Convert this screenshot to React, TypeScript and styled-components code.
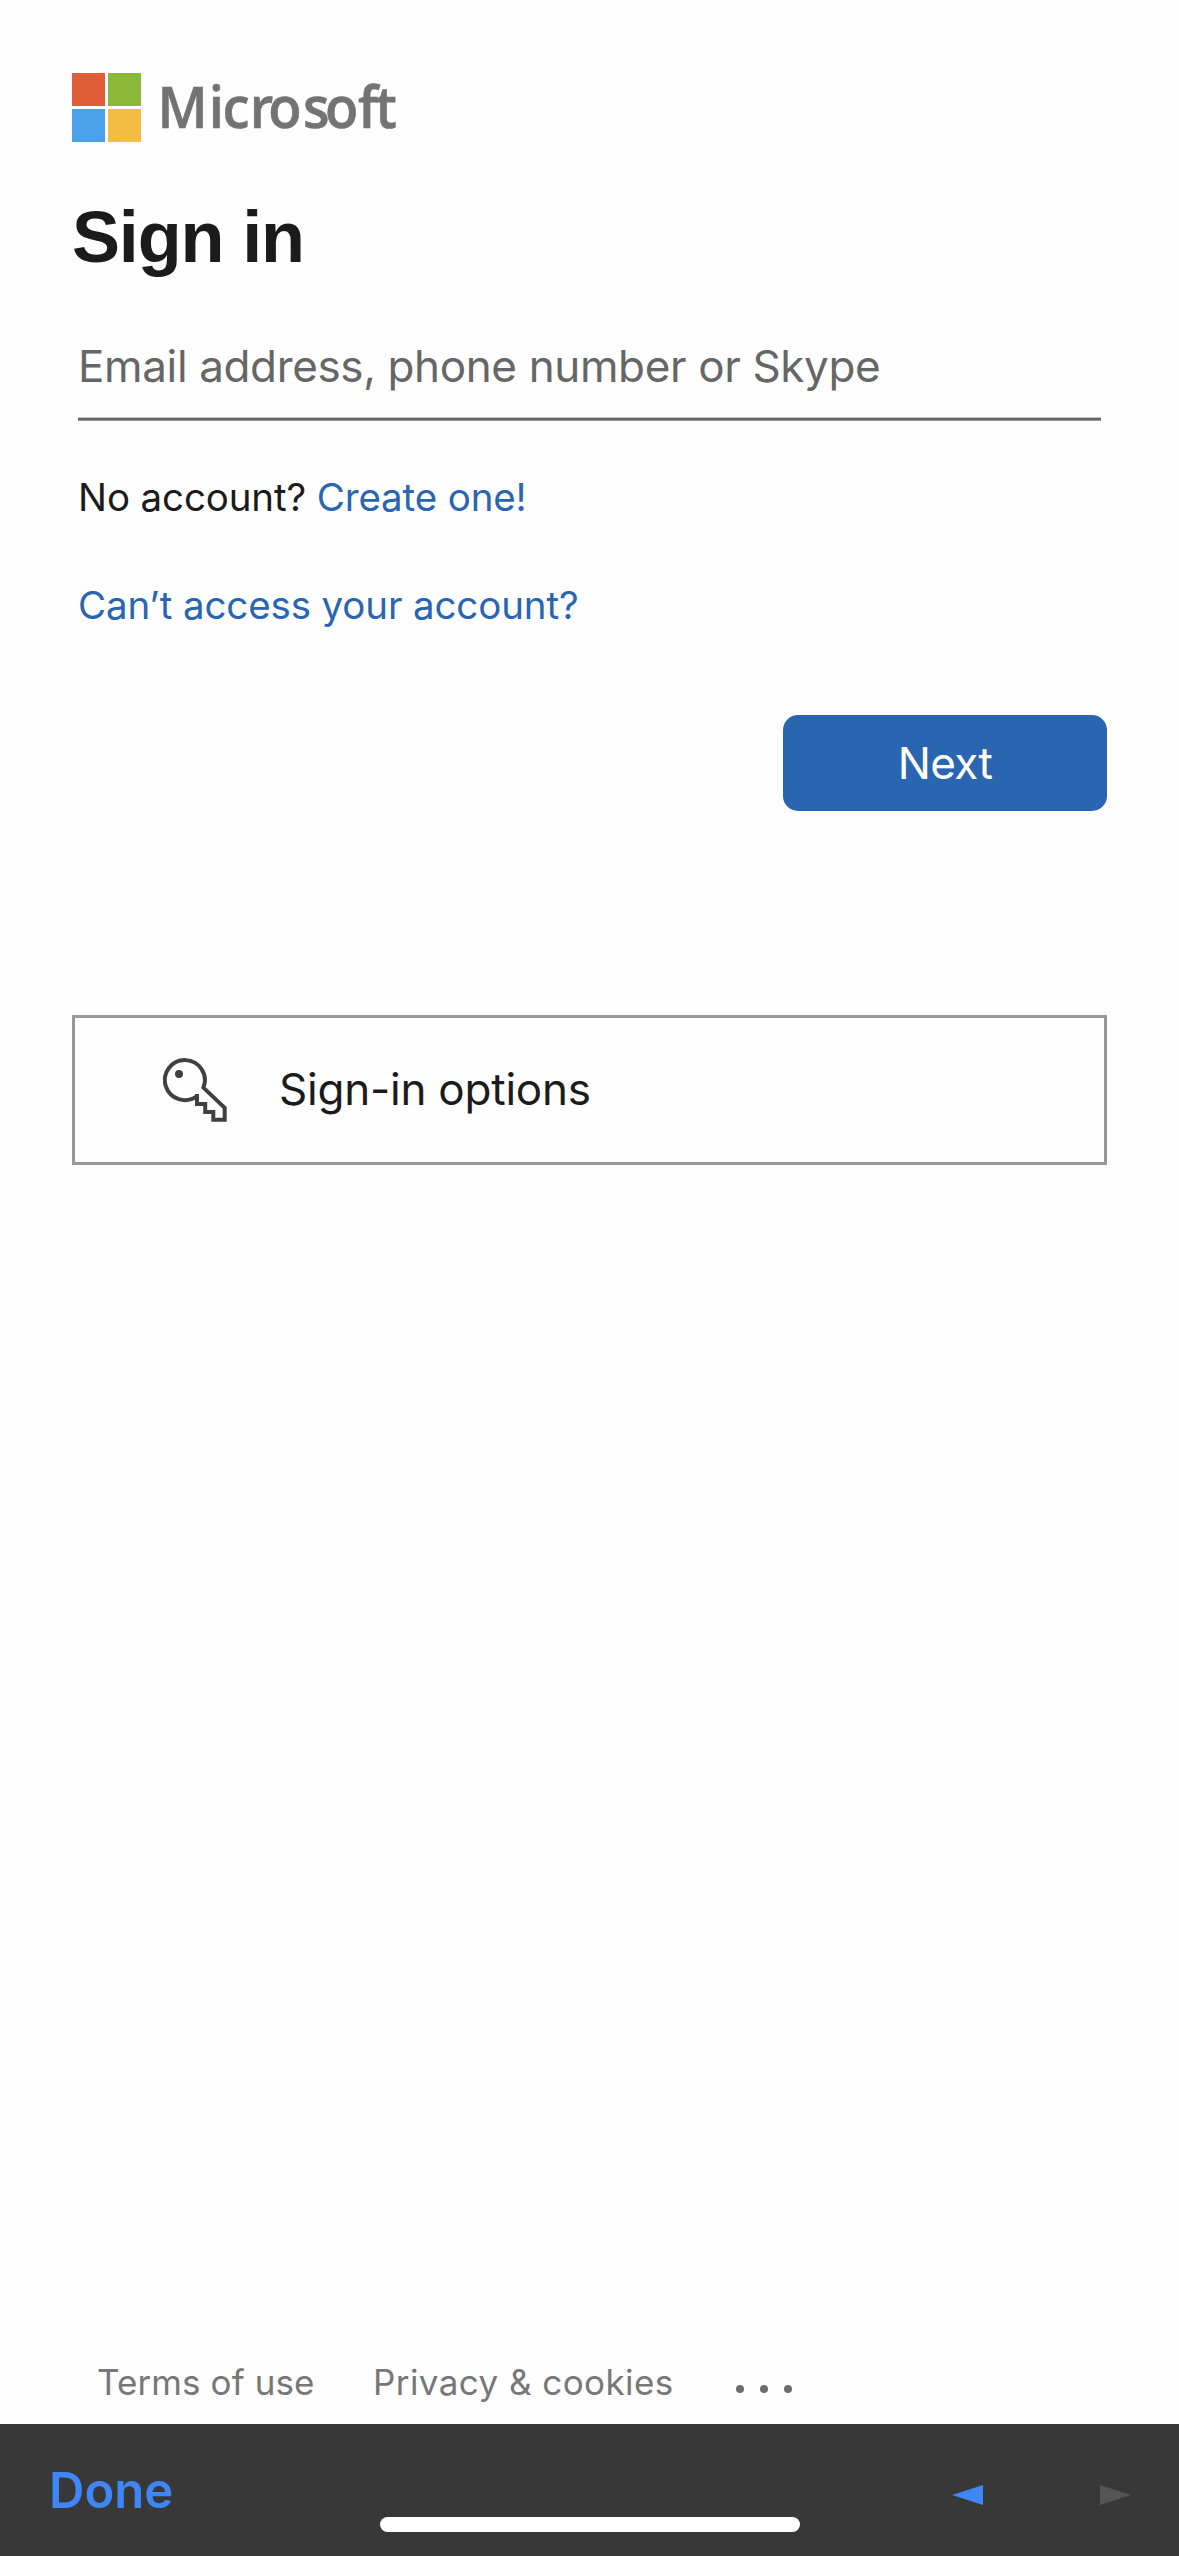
import React from "react";
import styled, { createGlobalStyle } from "styled-components";

const GlobalStyle = createGlobalStyle`
  * { box-sizing: border-box; }
  body { margin: 0; background: #fff; }
  h1, p { margin: 0; }
  a { text-decoration: none; }
`;

const Screen = styled.div`
  position: relative;
  display: flex;
  flex-direction: column;
  width: 1179px;
  height: 2556px;
  background: #fefefe;
  color: #1b1b1b;
  font-family: Inter, "Liberation Sans", sans-serif;
  overflow: hidden;
`;

const Content = styled.main`
  flex: 1;
  display: flex;
  flex-direction: column;
  padding: 73px 72px 0;
`;

const Brand = styled.svg`
  display: block;
  flex: none;
  overflow: visible;
`;

const Wordmark = styled.text`
  font: 600 57.5px "Open Sans", "Noto Sans", sans-serif;
  fill: #737373;
  stroke: #737373;
  stroke-width: 0.6px;
`;

const Title = styled.h1`
  margin-top: 53px;
  font: 700 72px/84px "Liberation Sans", Arial, sans-serif;
  letter-spacing: -1.17px;
`;

const Field = styled.div`
  margin: 57px 6px 0;
`;

const FieldLabel = styled.label`
  display: block;
  height: 81px;
  font-size: 44px;
  line-height: 60px;
  letter-spacing: -0.365px;
  color: #666;
`;

const FieldRule = styled.div`
  height: 4px;
  background: #666;
  border-top: 1px solid #c4c4c4;
  border-bottom: 1px solid #999;
`;

const Line = styled.p<{ $gap: number }>`
  margin: ${(p) => p.$gap}px 6px 0;
  font-size: 38.5px;
  line-height: 56px;
  letter-spacing: -0.13px;
`;

const Link = styled.a`
  color: #2a65b1;
`;

const NextButton = styled.button`
  align-self: flex-end;
  width: 324px;
  height: 96px;
  margin-top: 82px;
  padding: 0;
  border: 0;
  border-radius: 15px;
  background: #2a65b1;
  color: #fff;
  font: 400 44px/60px Inter, sans-serif;
  letter-spacing: -0.6px;
`;

const OptionsButton = styled.button`
  display: flex;
  align-items: center;
  gap: 52px;
  height: 150px;
  margin-top: 204px;
  padding: 0 0 0 88px;
  border: 3px solid #999;
  background: #fefefe;
  color: #1b1b1b;
  font: 400 44px/58px Inter, sans-serif;
  letter-spacing: -0.22px;
`;

const OptionsLabel = styled.span`
  padding-bottom: 2px;
`;

const Footer = styled.footer`
  display: flex;
  align-items: center;
  padding: 0 97px 18px;
  font-size: 35px;
  line-height: 48px;
  color: #777;
`;

const FooterLink = styled.a<{ $width: number; $tracking: number }>`
  width: ${(p) => p.$width}px;
  letter-spacing: ${(p) => p.$tracking}px;
  white-space: nowrap;
`;

const Dots = styled.svg`
  display: block;
  margin-top: 13px;
`;

const Toolbar = styled.nav`
  display: flex;
  align-items: center;
  height: 132px;
  padding: 0 48px 0 49px;
  background: #383838;
`;

const Done = styled.span`
  padding-top: 2px;
  font-size: 49px;
  line-height: 60px;
  font-weight: 600;
  color: #3f86f8;
`;

const Arrows = styled.div`
  display: flex;
  gap: 117px;
  margin: 9px 0 0 auto;
`;

const HomeIndicator = styled.div`
  position: absolute;
  left: 380px;
  bottom: 24px;
  width: 420px;
  height: 15px;
  border-radius: 8px;
  background: #fff;
`;

function MicrosoftLogo() {
  return (
    <Brand width="330" height="69" viewBox="0 0 330 69">
      <rect width="33" height="33" fill="#e05d37" />
      <rect x="36" width="33" height="33" fill="#8bb838" />
      <rect y="36" width="33" height="33" fill="#4aa0e9" />
      <rect x="36" y="36" width="33" height="33" fill="#f4bc42" />
      <Wordmark
        transform="scale(0.95 1)"
        x="90 143.9 158.3 187.2 206.7 243.3 266.4 301.1 319.2"
        y="55.4"
      >
        Microsoft
      </Wordmark>
    </Brand>
  );
}

function KeyIcon() {
  return (
    <svg width="64" height="64" viewBox="0 0 64 64" fill="none" stroke="#404040" strokeWidth="4">
      <path d="M34 38A20 20 0 1 1 40.4 29.6L61.7 49.8V61.8H50.3V54H42.2V46H34V36" />
      <circle cx="16" cy="16" r="4" fill="#404040" stroke="none" />
    </svg>
  );
}

export default function App() {
  return (
    <Screen>
      <GlobalStyle />
      <Content>
        <MicrosoftLogo />
        <Title>Sign in</Title>
        <Field>
          <FieldLabel>Email address, phone number or Skype</FieldLabel>
          <FieldRule />
        </Field>
        <Line $gap={48}>
          No account? <Link>Create one!</Link>
        </Line>
        <Line $gap={52}>
          <Link>Can’t access your account?</Link>
        </Line>
        <NextButton>Next</NextButton>
        <OptionsButton>
          <KeyIcon />
          <OptionsLabel>Sign-in options</OptionsLabel>
        </OptionsButton>
      </Content>
      <Footer>
        <FooterLink $width={276} $tracking={0.1}>Terms of use</FooterLink>
        <FooterLink $width={363} $tracking={0.43}>Privacy &amp; cookies</FooterLink>
        <Dots width="56" height="8" viewBox="0 0 56 8" fill="#6e6e6e">
          <circle cx="4" cy="4" r="4" />
          <circle cx="28" cy="4" r="4" />
          <circle cx="52" cy="4" r="4" />
        </Dots>
      </Footer>
      <Toolbar>
        <Done>Done</Done>
        <Arrows>
          <svg width="31" height="20" viewBox="0 0 31 20">
            <path d="M0 10L31 0V20Z" fill="#3f86f8" />
          </svg>
          <svg width="31" height="20" viewBox="0 0 31 20">
            <path d="M31 10L0 0V20Z" fill="#555" />
          </svg>
        </Arrows>
      </Toolbar>
      <HomeIndicator />
    </Screen>
  );
}
